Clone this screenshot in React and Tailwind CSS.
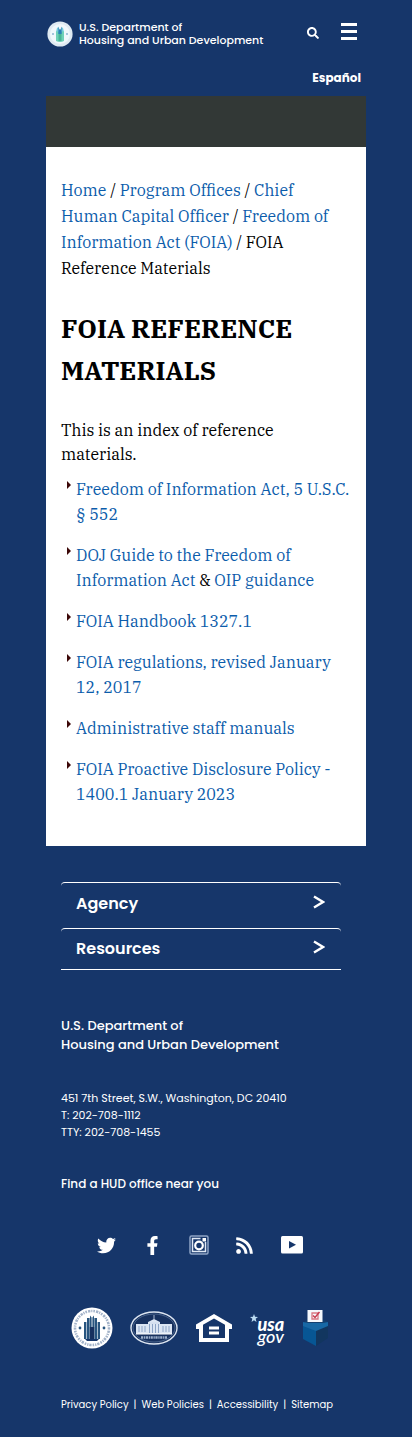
import React from "react";
import { FaTwitter, FaFacebookF, FaRss, FaSearch } from "react-icons/fa";

const links = "text-[#0b5cab] hover:underline";

function Seal({ className, tint }) {
  return (
    <svg viewBox="0 0 42 42" className={className} aria-hidden="true">
      <circle cx="21" cy="21" r="20.5" fill="#fff" />
      <circle cx="21" cy="21" r="17" fill="none" stroke="#a3b3c9" strokeWidth="2.6" strokeDasharray="1.6 1.1 2.3 0.9 1.2 1" />
      <circle cx="21" cy="21" r="13.5" fill="#fff" />
      <g fill={tint}>
        <path d="M13 15h2.400v17H13zM16 11h2.600v21H16zM19 8.5l1.600 2V20H19zM23 8.5l-1.600 2V20H23zM23.4 11H26v21h-2.600zM26.600 15H29v17h-2.400z" />
        <path d="M18.8 20h4.4v12h-4.4z" fill="#17315f" />
        <circle cx="9" cy="21" r="1.4" />
        <circle cx="33" cy="21" r="1.4" />
      </g>
      <path d="M14 32h14l-2 2h-10z" fill="#16366a" />
    </svg>
  );
}

function HeaderSeal() {
  return (
    <svg viewBox="0 0 26 26" className="size-[26px] shrink-0" aria-hidden="true">
      <circle cx="13" cy="13" r="12.6" fill="#dfeaf2" />
      <circle cx="13" cy="13" r="10" fill="#f1f8fc" />
      <path d="M9 11l1-4 1.500-1v5zM17 11l-1-4-1.500-1v5z" fill="#73cbdc" />
      <path d="M9 10.500h8V20q-4 2-8 0z" fill="#6fd1b8" />
      <path d="M11.300 5.500l1.200 3h1l1.200-3V13h-3.400z" fill="#2b82b8" />
      <path d="M11.500 13h3v7h-3z" fill="#49b596" />
      <circle cx="6" cy="13" r="1" fill="#8cb4d3" />
      <circle cx="20" cy="13" r="1" fill="#8cb4d3" />
    </svg>
  );
}

function InstagramIcon() {
  return (
    <svg viewBox="0 0 20 20" className="size-5" fill="none" aria-hidden="true">
      <rect x="1" y="1" width="18" height="18" rx="1.500" stroke="#8ea4c5" strokeWidth="1.500" />
      <path d="M3.500 7v9.500h13V7M3.500 7V3.500h8" stroke="#dfe8f4" strokeWidth="1.500" />
      <circle cx="10" cy="10.500" r="3.800" stroke="#fff" strokeWidth="2.200" />
      <rect x="13.500" y="3" width="3.500" height="3.500" fill="#fff" />
    </svg>
  );
}

function YoutubeIcon() {
  return (
    <svg viewBox="0 0 22 18" className="h-[18px] w-[22px]" aria-hidden="true">
      <rect width="22" height="17.500" rx="1.500" fill="#fff" />
      <path d="M8 5l7 3.800-7 3.800z" fill="#16366a" />
    </svg>
  );
}

function WhiteHouse() {
  return (
    <svg viewBox="0 0 48 34" className="h-[34px] w-12" aria-hidden="true">
      <ellipse cx="24" cy="17" rx="23" ry="16" fill="#17315f" stroke="#dce5f1" strokeWidth="1.400" />
      <ellipse cx="24" cy="17" rx="21" ry="14" fill="none" stroke="#5d789f" strokeWidth=".7" />
      <path d="M6 13h12v-2l6-3 6 3v2h12v10H6z" fill="#dbe5f3" />
      <path d="M24 4v4M18.500 12h11" stroke="#cbd8ea" strokeWidth=".8" />
      <path d="M9 15v6M12 15v6M15 15v6M19.500 13v9M22.500 13v9M25.500 13v9M28.500 13v9M33 15v6M36 15v6M39 15v6" stroke="#8ba3c6" strokeWidth="1" />
      <path d="M6 23h36" stroke="#fff" />
      <path d="M11 26.500h26" stroke="#9db0cc" strokeWidth="2.400" strokeDasharray="2.200 .7 1.300 .6" />
    </svg>
  );
}

function EqualHousing() {
  return (
    <svg viewBox="0 0 38 28" className="h-7 w-[38px]" aria-hidden="true">
      <path fill="#fff" fillRule="evenodd" d="M19 0L37 10.500V15h-3v13H4V15H1v-4.500zM19 4.500L8 10.800V24h22V10.800z" />
      <path fill="#fff" d="M14 12.500h10v3H14zM14 17.500h10v3H14z" />
    </svg>
  );
}

function BallotBox() {
  return (
    <svg viewBox="0 0 28 38" className="h-[38px] w-7" aria-hidden="true">
      <path d="M2 14l5-4h14l6 3-12 8z" fill="#14406f" />
      <path d="M2 14l13 6v17L2 30z" fill="#075694" />
      <path d="M15 20l12-6v15l-12 8z" fill="#12365f" />
      <path d="M2 13l5 1h15l5-1v4l-12 5-13-5z" fill="#1768a5" />
      <path d="M6.500 1h15v12h-15z" fill="#f5f8fc" />
      <path d="M11 4h6v6h-6z" fill="none" stroke="#d97883" strokeWidth="1.300" />
      <path d="M12 6.500l2 2L18.500 3" fill="none" stroke="#c83d50" strokeWidth="1.500" />
    </svg>
  );
}

const materials = [
  ["Freedom of Information Act, 5 U.S.C. § 552"],
  ["DOJ Guide to the Freedom of Information Act", "OIP guidance"],
  ["FOIA Handbook 1327.1"],
  ["FOIA regulations, revised January 12, 2017"],
  ["Administrative staff manuals"],
  ["FOIA Proactive Disclosure Policy - 1400.1 January 2023"],
];

function FooterToggle({ label, last }) {
  return (
    <button
      type="button"
      className={
        last
          ? "flex h-[42px] w-full items-center justify-between rounded-t border-y border-white px-[15px] text-left"
          : "flex h-[46px] w-full items-center justify-between rounded-t border-t border-white px-[15px] pb-1 text-left"
      }
    >
      <span className="text-base font-semibold">{label}</span>
      <svg viewBox="0 0 12 14" className="mr-px mb-1 h-3.5 w-3" fill="none" stroke="#fff" strokeWidth="2.400" aria-hidden="true">
        <path d="M1 1.500L10 7l-9 5.500" />
      </svg>
    </button>
  );
}

export default function App() {
  return (
    <div className="min-h-screen bg-[#16366a] px-[46px] font-['Poppins','Inter',sans-serif] text-white">
      <header className="flex h-24 flex-col">
        <div className="flex items-start pt-[21px]">
          <a href="#home" className="flex items-center gap-[6px] pl-px text-[11px] leading-[13px] font-medium">
            <HeaderSeal />
            <span className="whitespace-nowrap">
              U.S. Department of
              <br />
              Housing and Urban Development
            </span>
          </a>
          <button type="button" aria-label="Search" className="mt-[6px] ml-auto">
            <FaSearch className="size-3" />
          </button>
          <button type="button" aria-label="Menu" className="mt-[2px] mr-[9px] ml-[22px] flex w-4 flex-col gap-1">
            <span className="h-[3px] bg-white" />
            <span className="h-[3px] bg-white" />
            <span className="h-[3px] bg-white" />
          </button>
        </div>
        <a href="#es" className="mt-auto mr-[5px] mb-[10px] self-end text-xs leading-4 font-bold">
          Español
        </a>
      </header>

      <div className="h-[51px] bg-[#323836]" />

      <main className="bg-white px-[15px] pt-[30px] pb-[39px] font-['IBM_Plex_Serif','DejaVu_Serif_Condensed',serif] text-base text-black">
        <nav aria-label="Breadcrumb" className="pr-4 leading-[26px]">
          <a href="#home" className={links}>Home</a>
          {" / "}
          <a href="#offices" className={links}>Program Offices</a>
          {" / "}
          <a href="#chief" className={links}>Chief Human Capital Officer</a>
          {" / "}
          <a href="#foia" className={links}>Freedom of Information Act (FOIA)</a>
          {" / FOIA Reference Materials"}
        </nav>

        <h1 className="mt-[26px] text-[26px] leading-[42px] font-bold">FOIA REFERENCE MATERIALS</h1>

        <p className="mt-[27px] leading-6">
          This is an index of reference
          <br />
          materials.
        </p>

        <ul className="mt-[11px] flex flex-col gap-4 leading-[25px]">
          {materials.map((item) => (
            <li key={item[0]} className="flex">
              <svg viewBox="0 0 4 8" className="mt-1 mr-[5px] ml-[6px] h-2 w-1 shrink-0" aria-hidden="true">
                <path d="M0 0l4 4-4 4z" fill="#3c0808" />
              </svg>
              <span>
                {item.map((text, i) => (
                  <React.Fragment key={text}>
                    {i > 0 && " & "}
                    <a href="#doc" className={links}>{text}</a>
                  </React.Fragment>
                ))}
              </span>
            </li>
          ))}
        </ul>
      </main>

      <footer className="px-[15px] pt-9 pb-[22px]">
        <div className="mr-[10px]">
          <FooterToggle label="Agency" />
          <FooterToggle label="Resources" last />
        </div>

        <h2 className="mt-[46px] text-[13px] leading-[19px] font-medium whitespace-nowrap">
          U.S. Department of
          <br />
          Housing and Urban Development
        </h2>

        <address className="mt-9 text-[11px] leading-[17px] not-italic">
          451 7th Street, S.W., Washington, DC 20410
          <br />
          T: 202-708-1112
          <br />
          TTY: 202-708-1455
        </address>

        <a href="#offices" className="mt-[34px] block text-xs leading-[18px] font-medium">
          Find a HUD office near you
        </a>

        <div className="mt-[42px] mr-12 ml-9 flex h-5 items-center justify-between">
          <a href="#twitter" aria-label="Twitter"><FaTwitter className="size-[19px]" /></a>
          <a href="#facebook" aria-label="Facebook"><FaFacebookF className="size-[19px]" /></a>
          <a href="#instagram" aria-label="Instagram"><InstagramIcon /></a>
          <a href="#rss" aria-label="RSS"><FaRss className="size-[19px]" /></a>
          <a href="#youtube" aria-label="YouTube"><YoutubeIcon /></a>
        </div>

        <div className="mt-[52px] mr-[22px] ml-[10px] flex h-[42px] items-center justify-between">
          <a href="#hud" aria-label="HUD seal"><Seal className="size-[42px]" tint="#28557f" /></a>
          <a href="#whitehouse" aria-label="White House"><WhiteHouse /></a>
          <a href="#housing" aria-label="Equal housing"><EqualHousing /></a>
          <a href="#usagov" className="flex items-start font-['Lato','Inter',sans-serif] italic">
            <svg viewBox="0 0 10 10" className="size-2 shrink-0" aria-hidden="true">
              <path d="M5 0l1.300 3.400L10 3.600 7.100 6l1 4L5 7.800 1.900 10l1-4L0 3.600l3.700-.2z" fill="#bcdcf3" />
            </svg>
            <span className="mt-1 flex flex-col text-lg leading-3">
              <b className="font-black">usa</b>
              <span className="font-medium">gov</span>
            </span>
          </a>
          <a href="#vote" aria-label="Vote"><BallotBox /></a>
        </div>

        <nav aria-label="Legal" className="mt-12 flex gap-[5px] text-[10px] leading-4 whitespace-nowrap">
          <a href="#privacy">Privacy Policy</a>
          <span>|</span>
          <a href="#policies">Web Policies</a>
          <span>|</span>
          <a href="#accessibility">Accessibility</a>
          <span>|</span>
          <a href="#sitemap">Sitemap</a>
        </nav>
      </footer>
    </div>
  );
}
